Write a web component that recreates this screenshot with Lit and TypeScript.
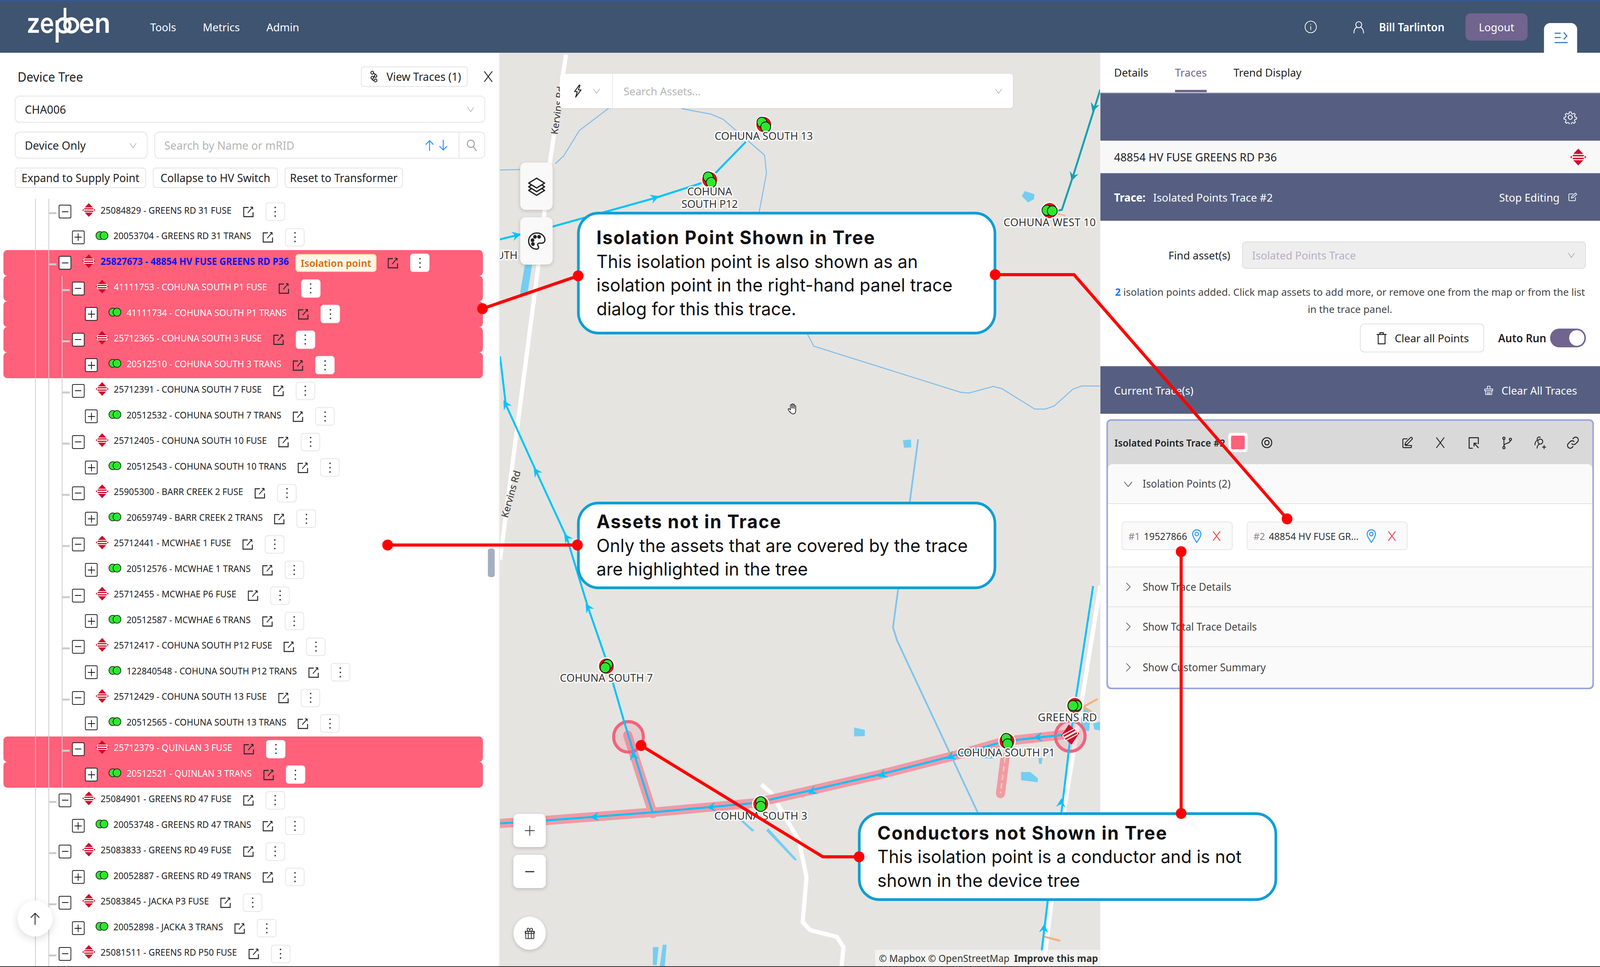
import { LitElement, html, css, svg } from 'lit';
import { customElement } from 'lit/decorators.js';

type Row = { level: number; kind: 'fuse' | 'trans'; text: string; hit?: boolean; sel?: boolean; inner?: boolean };

const ROWS: Row[] = [
  { level: 1, kind: 'fuse', text: '25084829 - GREENS RD 31 FUSE' },
  { level: 2, kind: 'trans', text: '20053704 - GREENS RD 31 TRANS' },
  { level: 1, kind: 'fuse', text: '25827673 - 48854 HV FUSE GREENS RD P36', hit: true, sel: true },
  { level: 2, kind: 'fuse', text: '41111753 - COHUNA SOUTH P1 FUSE', hit: true, inner: true },
  { level: 3, kind: 'trans', text: '41111734 - COHUNA SOUTH P1 TRANS', hit: true, inner: true },
  { level: 2, kind: 'fuse', text: '25712365 - COHUNA SOUTH 3 FUSE', hit: true, inner: true },
  { level: 3, kind: 'trans', text: '20512510 - COHUNA SOUTH 3 TRANS', hit: true, inner: true },
  { level: 2, kind: 'fuse', text: '25712391 - COHUNA SOUTH 7 FUSE', inner: true },
  { level: 3, kind: 'trans', text: '20512532 - COHUNA SOUTH 7 TRANS', inner: true },
  { level: 2, kind: 'fuse', text: '25712405 - COHUNA SOUTH 10 FUSE', inner: true },
  { level: 3, kind: 'trans', text: '20512543 - COHUNA SOUTH 10 TRANS', inner: true },
  { level: 2, kind: 'fuse', text: '25905300 - BARR CREEK 2 FUSE', inner: true },
  { level: 3, kind: 'trans', text: '20659749 - BARR CREEK 2 TRANS', inner: true },
  { level: 2, kind: 'fuse', text: '25712441 - MCWHAE 1 FUSE', inner: true },
  { level: 3, kind: 'trans', text: '20512576 - MCWHAE 1 TRANS', inner: true },
  { level: 2, kind: 'fuse', text: '25712455 - MCWHAE P6 FUSE', inner: true },
  { level: 3, kind: 'trans', text: '20512587 - MCWHAE 6 TRANS', inner: true },
  { level: 2, kind: 'fuse', text: '25712417 - COHUNA SOUTH P12 FUSE', inner: true },
  { level: 3, kind: 'trans', text: '122840548 - COHUNA SOUTH P12 TRANS', inner: true },
  { level: 2, kind: 'fuse', text: '25712429 - COHUNA SOUTH 13 FUSE', inner: true },
  { level: 3, kind: 'trans', text: '20512565 - COHUNA SOUTH 13 TRANS', inner: true },
  { level: 2, kind: 'fuse', text: '25712379 - QUINLAN 3 FUSE', hit: true, inner: true },
  { level: 3, kind: 'trans', text: '20512521 - QUINLAN 3 TRANS', hit: true, inner: true },
  { level: 1, kind: 'fuse', text: '25084901 - GREENS RD 47 FUSE' },
  { level: 2, kind: 'trans', text: '20053748 - GREENS RD 47 TRANS' },
  { level: 1, kind: 'fuse', text: '25083833 - GREENS RD 49 FUSE' },
  { level: 2, kind: 'trans', text: '20052887 - GREENS RD 49 TRANS' },
  { level: 1, kind: 'fuse', text: '25083845 - JACKA P3 FUSE' },
  { level: 2, kind: 'trans', text: '20052898 - JACKA 3 TRANS' },
  { level: 1, kind: 'fuse', text: '25081511 - GREENS RD P50 FUSE' },
];

// the design is 4198 wide, squeeze it into whatever window we actually get
const PAGE_W = 4198;

const icon = (body: unknown, size = 34, sw = 1.6) => html`<svg
  width=${size} height=${size} viewBox="0 0 24 24" fill="none" stroke="currentColor"
  stroke-width=${sw} stroke-linecap="round" stroke-linejoin="round">${body}</svg>`;

const fuseIcon = (w = 34, h = 35) => html`<svg width=${w} height=${h} viewBox="0 0 34 35">
  <path d="M17 0 34 17.5 17 35 0 17.5Z" fill="#d00c2b" />
  <rect x="4" y="12" width="26" height="5" rx="2" fill="none" stroke="#fff" stroke-width="2" />
  <rect x="4" y="18" width="26" height="5" rx="2" fill="none" stroke="#fff" stroke-width="2" />
</svg>`;

const transIcon = html`<svg width="33" height="24" viewBox="0 0 33 24">
  <circle cx="11" cy="12" r="10.3" fill="#2fe62f" stroke="#111" stroke-width="1.6" />
  <circle cx="22" cy="12" r="10.3" fill="#2fe62f" stroke="#111" stroke-width="1.6" />
</svg>`;

const extIcon = html`<svg class="ext" width="28" height="28" viewBox="0 0 28 28" fill="none" stroke="#222">
  <path d="M14 3H1.5V26.5H26V15" stroke-width="2.4" />
  <path d="M12 17 25 2M25 2v6M25 2h-6" stroke-width="2" />
</svg>`;

const chevDown = (size = 24) => icon(svg`<path d="M4 7l8 11 8-11" />`, size, 1.3);
const chevRight = icon(svg`<path d="M8 3l9 9-9 9" />`, 26, 1.5);
const cross = (size = 28, sw = 1.4) => icon(svg`<path d="M5 3l14 18M19 3L5 21" />`, size, sw);
const pin = html`<svg width="26" height="36" viewBox="0 0 26 36" fill="none" stroke="#1e90ff" stroke-width="2.4">
  <path d="M13 2C6.5 2 2 7 2 13c0 7 7 15 11 21 4-6 11-14 11-21C24 7 19.5 2 13 2Z" />
  <circle cx="13" cy="13" r="4.5" />
</svg>`;

const trace = (pts: number[][]) => pts.map((p) => p.join(',')).join(' ');

// map drawing is in page pixels, the viewBox below shifts it into the map pane
const arrow = (x: number, y: number, deg: number, fill = '#00c3ff') =>
  svg`<path transform="translate(${x} ${y}) rotate(${deg})" d="M12 0-11-12-3 0-11 12Z" fill=${fill} />`;

const marker = (x: number, y: number, dx: number, dy: number) => svg`
  <circle cx=${x} cy=${y} r="23" fill="#fff" />
  <circle cx=${x} cy=${y} r="19.5" fill="#e81010" />
  <circle cx=${x - dx} cy=${y - dy} r="13" fill="#2fe62f" stroke="#111" stroke-width="2" />
  <circle cx=${x + dx} cy=${y + dy} r="13" fill="#2fe62f" stroke="#111" stroke-width="2" />`;

const label = (x: number, y: number, t: string, w: number, anchor = 'middle') =>
  svg`<text class="lbl" x=${x} y=${y} text-anchor=${anchor} textLength=${w} lengthAdjust="spacing">${t}</text>`;

const river = [
  [[1597, 277], [1520, 334], [1479, 399], [1457, 419]],
  [[1310, 435], [1364, 434]],
  [[1788, 278], [1865, 292], [1897, 305], [2006, 397], [2011, 444], [1992, 542]],
  [[2118, 854], [2135, 886], [2520, 1004], [2542, 1006], [2606, 989], [2629, 995], [2715, 1047], [2743, 1047], [2766, 1039], [2815, 996], [2838, 988], [2887, 988]],
];

const water = [
  [[2681, 502], [2689, 489], [2714, 497], [2713, 510], [2697, 518]],
  [[2369, 1127], [2390, 1125], [2391, 1145], [2372, 1146]],
  [[2241, 1862], [2269, 1868], [2269, 1884], [2241, 1885]],
  [[2679, 1976], [2703, 1976], [2723, 1992], [2723, 2002], [2679, 1997]],
  [[1713, 2424], [1728, 2424], [1723, 2470], [1713, 2470]],
  [[1739, 2418], [1749, 2418], [1744, 2474], [1731, 2474]],
  [[1943, 2101], [1950, 2100], [1980, 2126], [1973, 2128]],
  [[2010, 2126], [2016, 2120], [2091, 2200], [2086, 2203]],
  [[1377, 678], [1396, 678], [1383, 758], [1364, 754]],
  [[2845, 1809], [2861, 1827], [2858, 1870], [2842, 1872], [2836, 1845]],
  [[2868, 1852], [2887, 1847], [2887, 1870], [2871, 1867]],
  [[2575, 1940], [2605, 1942], [2603, 1935], [2578, 1934]],
  [[2725, 1940], [2735, 1940], [2733, 1955], [2726, 1955]],
];

const corridor = [[1305, 2108], [1432, 2100], [1713, 2079], [1983, 2055], [2310, 1982], [2504, 1934], [2637, 1897], [2805, 1879]];

const mapArt = svg`
  <rect x="1312" y="135" width="1574" height="2340" fill="#e5e4e0" />
  <polyline class="road" points=${trace([[1485, 140], [1444, 408], [1415, 660], [1357, 1095], [1312, 1432]])} />
  <polyline class="road" points=${trace([[2887, 1500], [2791, 2079], [2759, 2308], [2738, 2475]])} />
  <polyline class="road" points=${trace([[1998, 2008], [2024, 2030], [2070, 2108], [2096, 2150], [2116, 2245], [2106, 2360], [2125, 2380], [2196, 2398], [2213, 2424], [2208, 2475]])} />
  ${water.map((w) => svg`<polygon points=${trace(w)} fill="#75cdf2" />`)}
  ${river.map((r) => svg`<polyline class="river" points=${trace(r)} />`)}
  <polyline class="river wide" points=${trace([[2409, 1124], [2343, 1606], [2354, 1640], [2565, 2079]])} />

  <polyline class="orange" points=${trace([[2880, 1789], [2842, 1809], [2864, 1822]])} />
  <polyline class="orange" points=${trace([[2739, 2397], [2782, 2408]])} />
  <polyline class="orange thin" points=${trace([[2772, 546], [2795, 552]])} />

  <polyline class="hl" points=${trace(corridor)} />
  <polyline class="hl" points=${trace([[1647, 1882], [1713, 2082]])} />
  <polyline class="hl" points=${trace([[2637, 1939], [2625, 2031]])} />
  <polyline points=${trace([[2637, 1939], [2625, 2031]])} fill="none" stroke="#f6c99a" stroke-width="4" stroke-dasharray="14 8" />
  <circle class="ring" cx="1649" cy="1886" r="39" />
  <circle class="ring" cx="2808" cy="1884" r="39" />

  <polyline class="ln" points=${trace([[2887, 229], [2815, 452], [2786, 537], [2775, 539]])} style="stroke:#159fb5" />
  ${arrow(2870, 275, 108, '#159fb5')}${arrow(2815, 452, 108, '#159fb5')}
  <polyline class="ln" points=${trace([[1957, 363], [1874, 446]])} />
  <polyline class="ln" points=${trace([[1842, 468], [1721, 506], [1450, 580], [1310, 613]])} />
  ${arrow(1718, 506, -20)}${arrow(1355, 602, -15)}
  <polyline class="ln" points=${trace([[1312, 912], [1327, 1035], [1407, 1207], [1487, 1376], [1543, 1555], [1591, 1690], [1637, 1845], [1662, 1924], [1713, 2082]])} />
  ${arrow(1327, 1035, -120)}${arrow(1407, 1207, -125)}${arrow(1487, 1376, -125)}${arrow(1543, 1555, -122)}${arrow(1662, 1934, -100)}
  <polyline class="ln" points=${trace(corridor)} />
  ${arrow(1560, 2091, 175)}${arrow(1866, 2066, 175)}${arrow(2131, 2026, 155)}${arrow(2315, 1983, 155)}${arrow(2494, 1937, 155)}${arrow(2723, 1887, 175)}
  <polyline class="ln" points=${trace([[2868, 1500], [2823, 1786], [2807, 1898], [2785, 2079], [2749, 2305], [2733, 2434]])} />
  ${arrow(2784, 2055, -85)}${arrow(2739, 2376, -85)}

  <text class="rd" transform="translate(1349 1267) rotate(-74)" text-anchor="middle">Kervins Rd</text>
  <text class="rd" transform="translate(1463 345) rotate(-82)" text-anchor="start">Kervins Rd</text>

  ${marker(2004, 319, 5, 6)}${label(2004, 358, 'COHUNA SOUTH 13', 258)}
  ${marker(1862, 460, 4, 7)}${label(1862, 500, 'COHUNA', 118)}${label(1862, 532, 'SOUTH P12', 148)}
  ${marker(2754, 539, 7, 1)}${label(2754, 579, 'COHUNA WEST 10', 242)}
  ${marker(1591, 1705, -3, 4)}${label(1591, 1745, 'COHUNA SOUTH 7', 244)}
  ${marker(1996, 2058, 0, 6)}${label(1996, 2098, 'COHUNA SOUTH 3', 244)}
  ${marker(2642, 1897, 2, 7)}${label(2640, 1936, 'COHUNA SOUTH P1', 256)}
  ${marker(2820, 1806, -5, 0)}${label(2723, 1846, 'GREENS RD 31', 196, 'start')}
  ${label(1358, 663, 'COHUNA SOUTH', 216, 'end')}

  <g transform="translate(2808 1880) rotate(-8)">
    <path d="M0-26 24 0 0 26-24 0Z" fill="#d00c2b" />
    <g transform="rotate(-20)" fill="none" stroke="#fff" stroke-width="2.6">
      <rect x="-19" y="-8" width="38" height="7" rx="3" /><rect x="-19" y="1" width="38" height="7" rx="3" />
    </g>
  </g>
  <g transform="translate(2067 1033) scale(1.15)" fill="#fff" stroke="#222" stroke-width="1.6" stroke-linejoin="round">
    <path d="M6 20C3 17 0 14 1 12s3 0 5 2V4c0-2 3-2 3 0v6-8c0-2 3-2 3 0v8-7c0-2 3-2 3 0v8-5c0-2 3-2 3 0v9c0 5-2 8-6 8-3 0-5-2-7-5Z" />
  </g>
`;

@customElement('app-root')
export class AppRoot extends LitElement {
  static styles = css`
    :host {
      display: block;
      width: 100%;
      height: 2475px;
      overflow: hidden;
      font-family: "Noto Sans", "Liberation Sans", sans-serif;
      color: #222;
    }
    * { box-sizing: border-box; }
    .page {
      position: relative;
      width: 4198px;
      height: 2475px;
      overflow: hidden;
      transform-origin: 0 0;
      background: #fff;
      display: flex;
      flex-direction: column;
      border-bottom: 2px solid #333;
    }

    /* top bar */
    .topbar {
      flex: 0 0 135px;
      display: flex;
      align-items: center;
      padding-left: 61px;
      background: #3f5470;
      border-top: 2px solid #2a5c9e;
      color: #fff;
      font-size: 28px;
    }
    .logo { width: 237px; height: 120px; margin: 0 96px 7px 0; flex: none; }
    .logo text { font-family: Inter, sans-serif; font-weight: 600; font-size: 70px; fill: #fff; }
    .nav { display: flex; gap: 70px; }
    .topright { margin-left: auto; display: flex; align-items: center; height: 100%; }
    .info { margin-right: 92px; display: flex; }
    .user { margin-right: 36px; display: flex; }
    .name { font-weight: 600; margin-right: 55px; }
    .logout {
      width: 163px; height: 70px; margin-right: 43px; border-radius: 14px;
      background: #71648e; display: flex; align-items: center; justify-content: center;
    }
    .dock {
      align-self: flex-end; width: 87px; height: 76px; margin-right: 60px;
      background: #fff; border-radius: 16px 16px 0 0; color: #2463c4;
      display: flex; align-items: center; justify-content: center;
    }

    .main { flex: 1; display: grid; grid-template-columns: 1312px 1574px 1312px; min-height: 0; }

    /* device tree pane */
    .left {
      position: relative;
      display: flex;
      flex-direction: column;
      padding-top: 35px;
      min-height: 0;
      overflow: hidden;
      border-right: 3px solid #ececec;
    }
    .head { padding: 0 36px 0 39px; display: flex; flex-direction: column; gap: 23px; }
    .titlebar { display: flex; align-items: center; height: 52px; padding-left: 7px; }
    .title { font-size: 32px; }
    .btn {
      height: 52px; display: flex; align-items: center; justify-content: center;
      border: 2px solid #e4e4e4; border-radius: 8px; font-size: 28.5px; background: #fff;
    }
    .trbtn { margin-left: auto; width: 280px; gap: 16px; margin-right: 37px; }
    .closex { display: flex; margin-right: -25px; }
    .field {
      height: 69px; display: flex; align-items: center; border: 2px solid #e4e4e4;
      border-radius: 12px; font-size: 29px; padding: 0 24px;
    }
    .field .chev { margin-left: auto; color: #a8a8a8; display: flex; }
    .inline { display: flex; gap: 18px; }
    .mode { width: 348px; }
    .search { flex: 1; padding-right: 0; color: #b4b4b4; }
    .updown { margin-left: auto; display: flex; color: #1e90ff; gap: 4px; margin-right: 24px; }
    .lens { width: 68px; height: 100%; border-left: 2px solid #e4e4e4; display: flex; align-items: center; justify-content: center; color: #888; }
    .actions { display: flex; gap: 18px; }
    .a1 { width: 344px; }
    .a2 { width: 328px; }
    .a3 { width: 310px; }

    .tree { flex: 1; margin-top: 22px; min-height: 0; overflow: hidden; padding-top: 6px; }
    .row {
      position: relative; height: 65.5px; margin: 0 42px 0 9px; display: flex; align-items: center;
      font-size: 23.2px; white-space: nowrap;
    }
    .row.hit { background: #ff607a; border-radius: 10px; color: #fff; }
    .row.sel .txt { color: #0a14ee; font-weight: 700; font-size: 24.2px; }
    .guide { position: absolute; top: 0; bottom: 0; width: 1.5px; background: #ccc; }
    .g1 { left: 83px; }
    .g2 { left: 118px; }
    .g3 { left: 153px; }
    .toggle {
      position: relative; flex: none; width: 33px; height: 35px; background: #fff;
      border: 2px solid #222; border-radius: 4px; color: #111;
      display: flex; align-items: center; justify-content: center;
    }
    .tick { position: absolute; left: -27px; top: 17px; width: 19px; height: 5px; background: #ccc; }
    .pic { flex: none; margin-left: 29px; margin-right: 14px; display: flex; margin-top: -9px; }
    .txt { margin-top: -8px; }
    .ext { flex: none; margin-left: 30px; }
    .tag {
      flex: none; margin-left: 17px; margin-right: -1px; width: 213px; height: 46px; border: 2px solid #ffd591;
      background: #fff7e6; color: #d46b08; border-radius: 8px; font-size: 26px; font-weight: 600;
      display: flex; align-items: center; justify-content: center;
    }
    .kebab {
      flex: none; width: 51px; height: 47px; margin-left: 31px; background: #fff; border: 2px solid #e6e6e6;
      border-radius: 8px; display: flex; flex-direction: column; align-items: center; justify-content: center; gap: 7px;
    }
    .row.hit .kebab { border-color: #ffe9ec; }
    .kebab i { width: 4px; height: 4px; border-radius: 50%; background: #333; }
    .scroll { position: absolute; left: 1280px; top: 1269px; width: 18px; height: 73px; background: #a5afc0; border-radius: 6px; }
    .totop {
      position: absolute; left: 46px; top: 2170px; width: 92px; height: 92px; border-radius: 50%;
      background: #fff; box-shadow: 0 6px 22px rgba(0, 0, 0, .14); display: flex; align-items: center; justify-content: center; color: #222;
    }

    /* map */
    .map { position: relative; overflow: hidden; background: #e5e4e0; }
    .art { display: block; }
    .road { fill: none; stroke: #fff; stroke-width: 11; }
    .river { fill: none; stroke: #7cbcec; stroke-width: 2.5; }
    .river.wide { stroke-width: 4.5; stroke: #7fc4ee; }
    .orange { fill: none; stroke: #f5b078; stroke-width: 5; }
    .orange.thin { stroke-width: 3; }
    .hl { fill: none; stroke: #f19aa6; stroke-width: 24; stroke-linecap: round; stroke-linejoin: round; }
    .ln { fill: none; stroke: #00c3ff; stroke-width: 5; }
    .ring { fill: rgba(240, 100, 125, .18); stroke: #f0647d; stroke-width: 8; }
    .lbl {
      font-family: "Noto Sans", sans-serif; font-size: 28px; fill: #333;
      paint-order: stroke; stroke: rgba(255, 255, 255, .95); stroke-width: 7px; stroke-linejoin: round;
    }
    .rd { font-family: "Noto Sans", sans-serif; font-size: 25px; fill: #333; paint-order: stroke; stroke: #e5e4e0; stroke-width: 3px; }

    .asset {
      position: absolute; left: 157px; top: 54px; width: 1189px; height: 88px; background: #fff;
      border-radius: 8px; display: flex; align-items: center; font-size: 28px; color: #b4b4b4;
      box-shadow: 0 1px 3px rgba(0, 0, 0, .1);
    }
    .asset-type { width: 139px; height: 100%; border-right: 2px solid #e8e8e8; display: flex; align-items: center; justify-content: center; gap: 20px; color: #222; }
    .asset-type .chev, .asset .end { color: #a8a8a8; display: flex; }
    .asset-ph { padding-left: 28px; }
    .asset .end { margin-left: auto; margin-right: 26px; }
    .tool {
      position: absolute; left: 53px; width: 85px; height: 121px; border-radius: 14px; background: #f9f9f9;
      box-shadow: 0 3px 10px rgba(0, 0, 0, .16); display: flex; align-items: center; justify-content: center; color: #222;
    }
    .t-layers { top: 281px; }
    .t-palette { top: 421px; }
    .zoomb {
      position: absolute; left: 35px; width: 85px; height: 85px; background: #fff; border-radius: 12px;
      box-shadow: 0 3px 10px rgba(0, 0, 0, .18); display: flex; align-items: center; justify-content: center; color: #333;
    }
    .z-in { top: 1948px; }
    .z-out { top: 2053px; }
    .gift { top: 2211px; border-radius: 50%; }
    .attrib {
      position: absolute; right: 0; bottom: 0; height: 42px; width: 590px; padding: 0 10px;
      background: rgba(255, 255, 255, .55); display: flex; align-items: center; gap: 12px;
      font-size: 25px; color: #333; white-space: nowrap;
    }
    .attrib b { font-weight: 700; }

    /* right pane */
    .right { display: flex; flex-direction: column; min-height: 0; overflow: hidden; font-size: 28px; border-left: 1px solid #eee; }
    .tabs { flex: 0 0 101px; display: flex; gap: 70px; padding-left: 36px; border-bottom: 2px solid #d6d6d6; }
    .tab { height: 101px; padding-top: 31px; }
    .tab.on { color: #71648e; border-bottom: 6px solid #71648e; }
    .band {
      flex: 0 0 122px; background: #565f82; color: #fff; display: flex; align-items: center;
      padding: 0 60px 0 36px; border-top: 2px solid #6d759a;
    }
    .band .gap-left { margin-left: auto; display: flex; align-items: center; gap: 20px; }
    .band b { margin-right: 20px; }
    .assetline {
      flex: 0 0 83px; background: #f8f8f8; display: flex; align-items: center; justify-content: space-between;
      padding: 0 36px 0 36px; font-size: 29px;
    }
    .form { flex: 0 0 372px; padding: 53px 37px 0 36px; }
    .findrow { display: flex; align-items: center; gap: 31px; }
    .findrow label { width: 305px; text-align: right; }
    .findsel {
      flex: 1; height: 70px; background: #eee; border: 2px solid #ddd; border-radius: 10px; padding: 0 24px;
      color: #b5aec5; display: flex; align-items: center;
    }
    .findsel .chev { margin-left: auto; color: #999; display: flex; }
    .note { margin: 37px 0 0; text-align: center; line-height: 44px; font-size: 26.3px; color: #444; white-space: nowrap; }
    .note b { color: #1677ff; font-weight: 700; }
    .formend { display: flex; justify-content: flex-end; align-items: center; margin-top: 15px; }
    .clearbtn {
      width: 326px; height: 74px; border: 2px solid #e0e0e0; border-radius: 12px; display: flex; align-items: center; justify-content: center; gap: 16px;
    }
    .auto { font-weight: 600; margin: 0 10px 0 37px; }
    .switch { width: 94px; height: 48px; border-radius: 24px; background: #71648e; display: flex; align-items: center; justify-content: flex-end; padding-right: 4px; }
    .switch i { width: 40px; height: 40px; border-radius: 50%; background: #fff; }

    .card {
      margin: 14px 16px 0; height: 691px; border: 4px solid #98a6de; border-radius: 12px; background: #d9d9d9;
      display: flex; flex-direction: column; overflow: hidden;
    }
    .cardhead { flex: 0 0 111px; display: flex; align-items: center; padding-left: 17px; }
    .cardname { font-size: 25px; font-weight: 600; width: 299px; white-space: nowrap; }
    .swatch { width: 50px; height: 49px; padding: 7px; background: #fff; border-radius: 6px; }
    .swatch i { display: block; height: 100%; background: #ff607a; border-radius: 4px; }
    .eye { display: flex; margin-left: 34px; }
    .cardtools { margin-left: auto; margin-right: 34px; display: flex; gap: 53px; }
    .collapse { flex: 1; background: #fafafa; border-radius: 12px; overflow: hidden; display: flex; flex-direction: column; font-size: 26.5px; color: #444; }
    .coll { display: flex; align-items: center; gap: 25px; padding-left: 40px; height: 102px; border-bottom: 2px solid #e2e2e2; }
    .coll:last-child { border-bottom: 0; height: 103px; }
    .coll span { display: flex; }
    .chips { height: 162px; background: #fff; border-bottom: 2px solid #e2e2e2; display: flex; gap: 37px; padding: 45px 0 0 36px; }
    .chip {
      height: 73px; background: #fafafa; border: 2px solid #e6e6e6; border-radius: 8px; display: flex; align-items: center;
      padding: 0 14px 0 16px; color: #333; white-space: nowrap; font-size: 24.8px;
    }
    .c1 { width: 291px; }
    .c2 { width: 422px; }
    .num { color: #888; margin-right: 10px; }
    .chip .pinw { display: flex; margin-left: 20px; }
    .c1 .pinw { margin-left: 12px; }
    .chip .xw { display: flex; margin-left: 24px; color: #f0454f; }
    .c2 .xw { margin-left: 26px; }

    /* annotations */
    .note-box {
      position: absolute; background: #fff; border: 7px solid #0f9ed5; border-radius: 56px;
      display: flex; flex-direction: column; justify-content: center; padding-left: 44px;
      font-family: Inter, "Noto Sans", sans-serif; font-size: 46px; line-height: 60.5px; color: #111;
    }
    .note-box strong { font-weight: 700; font-size: 47.5px; letter-spacing: 2.2px; }
    .n1 { left: 1514px; top: 542px; width: 1100px; height: 314px; }
    .n2 { left: 1514px; top: 1284px; width: 1100px; height: 224px; }
    .n3 { left: 2251px; top: 2079px; width: 1100px; height: 227px; }
    .wires { position: absolute; left: 0; top: 0; pointer-events: none; }
  `;

  private renderRow(r: Row) {
    // level 1 = toggle at 154px on the page, each level steps 34.5px
    const pad = 145 + (r.level - 1) * 34.5;
    return html`<div class="row ${r.hit ? 'hit' : ''} ${r.sel ? 'sel' : ''}" style="padding-left:${pad}px">
      <span class="guide g1"></span><span class="guide g2"></span>
      ${r.inner ? html`<span class="guide g3"></span>` : ''}
      <span class="toggle">
        ${r.kind === 'fuse' ? html`<span class="tick"></span>` : ''}
        ${icon(r.kind === 'fuse' ? svg`<path d="M5 12h14" />` : svg`<path d="M12 4v16M4 12h16" />`, 26, 1.8)}
      </span>
      <span class="pic">${r.kind === 'fuse' ? fuseIcon() : transIcon}</span>
      <span class="txt">${r.text}</span>
      ${r.sel ? html`<span class="tag">Isolation point</span>` : ''}
      ${extIcon}
      <span class="kebab"><i></i><i></i><i></i></span>
    </div>`;
  }

  private renderLeft() {
    return html`<section class="left">
      <div class="head">
        <div class="titlebar">
          <span class="title">Device Tree</span>
          <span class="btn trbtn">
            ${icon(svg`<circle cx="9" cy="5" r="2.6" /><circle cx="15" cy="19" r="2.6" /><circle cx="15" cy="11" r="2.4" /><circle cx="9" cy="14" r="2.4" /><path d="M11 6c3 1 4 2 4 2.600M12.800 11.500 11 13M9 16.500c0 2 2 2.500 3.500 2.500" />`, 34)}
            View Traces (1)
          </span>
          <span class="closex">${cross(34, 1.5)}</span>
        </div>
        <div class="field">CHA006<span class="chev">${chevDown()}</span></div>
        <div class="inline">
          <div class="field mode">Device Only<span class="chev">${chevDown()}</span></div>
          <div class="field search">
            Search by Name or mRID
            <span class="updown">
              ${icon(svg`<path d="M12 22V3M5 10l7-7 7 7" />`, 32, 1.8)}
              ${icon(svg`<path d="M12 2v19M5 14l7 7 7-7" />`, 32, 1.8)}
            </span>
            <span class="lens">${icon(svg`<circle cx="10" cy="9" r="7" /><path d="M15 15l6 7" />`, 32, 1.5)}</span>
          </div>
        </div>
        <div class="actions">
          <span class="btn a1">Expand to Supply Point</span>
          <span class="btn a2">Collapse to HV Switch</span>
          <span class="btn a3">Reset to Transformer</span>
        </div>
      </div>
      <div class="tree">${ROWS.map((r) => this.renderRow(r))}</div>
      <span class="scroll"></span>
      <span class="totop">${icon(svg`<path d="M12 22V3M5 10l7-7 7 7" />`, 36, 1.5)}</span>
    </section>`;
  }

  private renderMap() {
    return html`<section class="map">
      <svg class="art" width="1574" height="2340" viewBox="1312 135 1574 2340">${mapArt}</svg>
      <div class="asset">
        <span class="asset-type">
          ${icon(svg`<path d="M15 1 6 13h5L8 23l10-13h-5l3-8Z" />`, 34, 1.7)}
          <span class="chev">${chevDown()}</span>
        </span>
        <span class="asset-ph">Search Assets...</span>
        <span class="end">${chevDown()}</span>
      </div>
      <span class="tool t-layers">${icon(svg`<path d="M12 2 22 8l-10 6L2 8Z" /><path d="M5 10.500 2 12.500l10 6 10-6-3-2" /><path d="M5 15 2 17l10 6 10-6-3-2" />`, 50, 1.6)}</span>
      <span class="tool t-palette">
        ${icon(svg`<path d="M12 2.500A9.700 9.700 0 0 0 2.300 12c0 5.300 4.300 9.500 9.700 9.500 1.500 0 2.400-1 2.400-2.100 0-1.400-1.200-1.600-1.200-3 0-1.100.9-1.900 2-1.900h2.800c2.600 0 4-1.700 4-4 0-4.500-4.400-8-10-8Z" /><circle cx="7" cy="11" r="1.500" fill="currentColor" /><circle cx="10" cy="7" r="1.500" fill="currentColor" /><circle cx="15" cy="7" r="1.500" fill="currentColor" /><circle cx="7.500" cy="15.500" r="1.500" fill="currentColor" />`, 52, 1.5)}
      </span>
      <span class="zoomb z-in">${icon(svg`<path d="M12 3v18M3 12h18" />`, 32, 1.5)}</span>
      <span class="zoomb z-out">${icon(svg`<path d="M4 12h16" />`, 32, 2.2)}</span>
      <span class="zoomb gift">
        ${icon(svg`<rect x="4" y="8" width="16" height="14" /><path d="M3 8h18v4H3ZM9 8v14M15 8v14M9 8C6 6 6 2 9 2c2 0 3 3 3 6 0-3 1-6 3-6 3 0 3 4 0 6" />`, 32, 1.5)}
      </span>
      <div class="attrib"><span>© Mapbox © OpenStreetMap</span><b>Improve this map</b></div>
    </section>`;
  }

  private renderRight() {
    return html`<section class="right">
      <nav class="tabs">
        <span class="tab">Details</span><span class="tab on">Traces</span><span class="tab">Trend Display</span>
      </nav>
      <div class="band">
        <span class="gap-left">${icon(svg`<circle cx="12" cy="12" r="3.500" /><path d="M10.200 2h3.600l.5 3 2.500 1.100 2.500-1.700 2.500 2.500-1.700 2.500 1.100 2.500 3 .5v3.200l-3 .5-1.100 2.500 1.700 2.500-2.500 2.500-2.500-1.700-2.500 1.100-.5 3h-3.600l-.5-3-2.500-1.100-2.500 1.700-2.500-2.500 1.700-2.500-1.100-2.500-3-.5v-3.200l3-.5 1.100-2.500-1.700-2.500 2.500-2.500 2.500 1.700 2.500-1.100Z" transform="translate(1.200 1.200) scale(.9)" />`, 36, 1.5)}</span>
      </div>
      <div class="assetline">48854 HV FUSE GREENS RD P36 ${fuseIcon(42, 44)}</div>
      <div class="band">
        <b>Trace:</b> Isolated Points Trace #2
        <span class="gap-left">Stop Editing ${icon(svg`<path d="M14 4H6a2 2 0 0 0-2 2v12a2 2 0 0 0 2 2h12a2 2 0 0 0 2-2v-5" /><path d="M10 14l1-4 9-8 3 3-9 8Z" />`, 26, 1.7)}</span>
      </div>
      <div class="form">
        <div class="findrow">
          <label>Find asset(s)</label>
          <div class="findsel">Isolated Points Trace<span class="chev">${chevDown()}</span></div>
        </div>
        <p class="note"><b>2</b> isolation points added. Click map assets to add more, or remove one from the map or from the list<br />in the trace panel.</p>
        <div class="formend">
          <span class="clearbtn">
            ${icon(svg`<path d="M4 6h16M9 6V3h6v3M6 6v16h12V6" />`, 36, 1.6)}
            Clear all Points
          </span>
          <span class="auto">Auto Run</span>
          <span class="switch"><i></i></span>
        </div>
      </div>
      <div class="band">
        Current Trace(s)
        <span class="gap-left">
          ${icon(svg`<path d="M9 9V3h6v6M3 9h18v4H3ZM5 13v8h14v-8M9 16v5M12 16v5M15 16v5" />`, 28, 1.5)}
          Clear All Traces
        </span>
      </div>
      <div class="card">
        <div class="cardhead">
          <span class="cardname">Isolated Points Trace #2</span>
          <span class="swatch"><i></i></span>
          <span class="eye">${icon(svg`<circle cx="12" cy="12" r="9" /><circle cx="12" cy="12" r="4" />`, 34, 1.8)}</span>
          <span class="cardtools">
            ${icon(svg`<path d="M12 5H6a2 2 0 0 0-2 2v12a2 2 0 0 0 2 2h12a2 2 0 0 0 2-2v-2H9" /><path d="M8 16l1-4 9-9a2 2 0 0 1 3 3l-9 9Z" />`, 34, 1.7)}
            ${cross(34, 1.5)}
            ${icon(svg`<path d="M10 22H4V3h17v11M13 13l8 8M13 13h5M13 13v5" />`, 34, 1.8)}
            ${icon(svg`<circle cx="7" cy="4" r="2" /><circle cx="7" cy="21" r="2" /><circle cx="19" cy="6" r="2" /><path d="M7 6v13M19 8c0 6-12 4-12 10" />`, 34, 1.6)}
            ${icon(svg`<circle cx="13" cy="10" r="4.500" /><path d="M7 22c0-4 2-6 4-7M13 2.500C10 .5 6 3 7.500 7.500 5 9 3 12 3 16M17 20h6M20 17v6" />`, 34, 1.6)}
            ${icon(svg`<path d="M10 14a5 5 0 0 0 7 0l4-4a5 5 0 0 0-7-7l-2 2M14 10a5 5 0 0 0-7 0l-4 4a5 5 0 0 0 7 7l2-2" />`, 34, 1.8)}
          </span>
        </div>
        <div class="collapse">
          <div class="coll"><span>${icon(svg`<path d="M3 8l9 11 9-11" />`, 26, 1.5)}</span>Isolation Points (2)</div>
          <div class="chips">
            <div class="chip c1"><span class="num">#1</span>19527866<span class="pinw">${pin}</span><span class="xw">${cross(30, 1.8)}</span></div>
            <div class="chip c2"><span class="num">#2</span>48854 HV FUSE GR...<span class="pinw">${pin}</span><span class="xw">${cross(30, 1.8)}</span></div>
          </div>
          <div class="coll"><span>${chevRight}</span>Show Trace Details</div>
          <div class="coll"><span>${chevRight}</span>Show Total Trace Details</div>
          <div class="coll"><span>${chevRight}</span>Show Customer Summary</div>
        </div>
      </div>
    </section>`;
  }

  render() {
    const fit = Math.min(1, window.innerWidth / PAGE_W);
    return html`<div class="page" style="transform:scaleX(${fit})">
      <header class="topbar">
        <svg class="logo" viewBox="61 5 237 120">
          <text x="70" y="84" textLength="72" lengthAdjust="spacingAndGlyphs">ze</text>
          <text x="207" y="84" textLength="83" lengthAdjust="spacingAndGlyphs">en</text>
          <g fill="none" stroke="#fff" stroke-width="8">
            <circle cx="167" cy="65" r="17" /><circle cx="187" cy="65" r="17" />
          </g>
          <rect x="146" y="52" width="8" height="57" fill="#fff" />
          <rect x="167" y="20" width="7" height="36" fill="#fff" />
        </svg>
        <nav class="nav"><span>Tools</span><span>Metrics</span><span>Admin</span></nav>
        <div class="topright">
          <span class="info">${icon(svg`<circle cx="12" cy="12" r="10.500" /><path d="M12 11v6M12 7v.5" />`, 34, 1.3)}</span>
          <span class="user">${icon(svg`<circle cx="12" cy="8" r="5.500" /><path d="M3 23c0-6 3-10 6-10.500M21 23c0-6-3-10-6-10.500" />`, 34, 1.5)}</span>
          <span class="name">Bill Tarlinton</span>
          <span class="logout">Logout</span>
          <span class="dock">
            <svg width="36" height="36" viewBox="0 0 36 36" fill="none" stroke="currentColor" stroke-width="2.600">
              <path d="M2 6h16M2 17h16M2 30h34M26 4l8 9-8 9" />
            </svg>
          </span>
        </div>
      </header>
      <div class="main">${this.renderLeft()}${this.renderMap()}${this.renderRight()}</div>

      <div class="note-box n1">
        <strong>Isolation Point Shown in Tree</strong>
        <span>This isolation point is also shown as an</span>
        <span>isolation point in the right-hand panel trace</span>
        <span>dialog for this this trace.</span>
      </div>
      <div class="note-box n2">
        <strong>Assets not in Trace</strong>
        <span>Only the assets that are covered by the trace</span>
        <span>are highlighted in the tree</span>
      </div>
      <div class="note-box n3">
        <strong>Conductors not Shown in Tree</strong>
        <span>This isolation point is a conductor and is not</span>
        <span>shown in the device tree</span>
      </div>

      <svg class="wires" width="4198" height="2475" fill="none" stroke="#f00" stroke-width="8">
        <path d="M1266 790 1517 706" />
        <path d="M2611 703H2818L3377 1328" />
        <path d="M1017 1395H1515" />
        <path d="M2254 2193H2159L1682 1908" />
        <path d="M3099 1412V2082" />
        <g fill="#f00" stroke="none">
          ${[[1266, 790], [1517, 706], [2611, 703], [3377, 1328], [1017, 1395], [1515, 1395], [2254, 2193], [1682, 1908], [3099, 1412], [3099, 2082]].map(
            ([x, y]) => svg`<circle cx=${x} cy=${y} r="14" />`
          )}
        </g>
      </svg>
    </div>`;
  }
}
